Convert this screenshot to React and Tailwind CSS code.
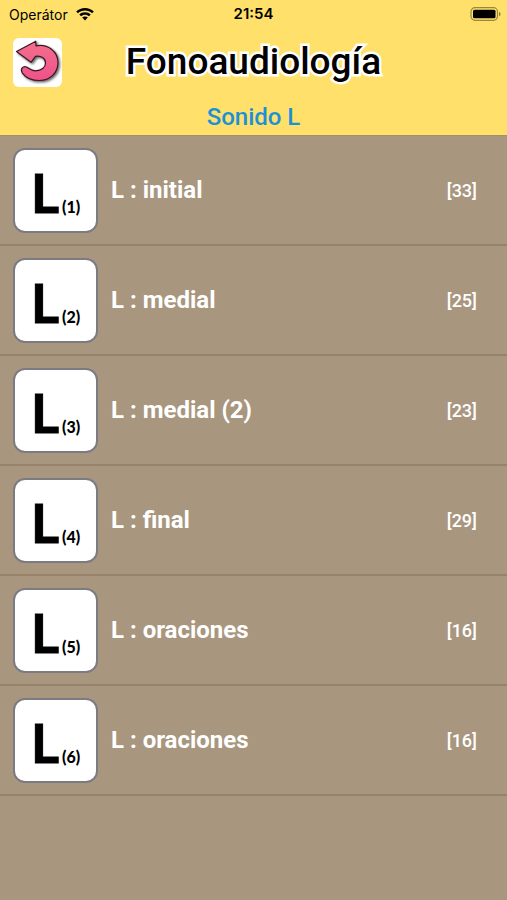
import React from 'react';

// --- DATA ---
const SOUNDS = [
  { id: 1, label: 'L : initial', count: 33 },
  { id: 2, label: 'L : medial', count: 25 },
  { id: 3, label: 'L : medial (2)', count: 23 },
  { id: 4, label: 'L : final', count: 29 },
  { id: 5, label: 'L : oraciones', count: 16 },
  { id: 6, label: 'L : oraciones', count: 16 },
];

// --- ICONS ---

const WifiIcon = () => (
  <svg viewBox="0 0 18 13" className="h-[13px] w-[18px]" fill="#000" aria-hidden="true">
    <path d="M9 0C5.600 0 2.500 1.300 0.200 3.500l1.700 1.800C3.800 3.500 6.300 2.500 9 2.500s5.200 1 7.100 2.800l1.700-1.800C15.500 1.300 12.400 0 9 0Z" />
    <path d="M9 4.300c-2.200 0-4.200.8-5.700 2.300L5 8.300c1.100-1 2.500-1.600 4-1.600s2.900.6 4 1.600l1.700-1.700C13.200 5.100 11.200 4.300 9 4.300Z" />
    <path d="M9 8.400c-1.100 0-2 .4-2.800 1.100L9 12.600l2.800-3.100C11 8.800 10.100 8.400 9 8.400Z" />
  </svg>
);

const BatteryIcon = () => (
  <svg viewBox="0 0 32 14" className="h-[14px] w-8" aria-hidden="true">
    <rect x="1" y="0.700" width="26.500" height="12.600" rx="4" fill="none" stroke="#000" strokeOpacity="0.400" strokeWidth="1.200" />
    <rect x="3" y="2.700" width="22.500" height="8.600" rx="1.500" fill="#000" />
    <path d="M29 4.700v4.600c1-.4 1.600-1.300 1.600-2.300S30 5.100 29 4.700Z" fill="#000" fillOpacity="0.400" />
  </svg>
);

const BackArrow = () => (
  <svg viewBox="0 0 49 49" className="h-full w-full" aria-hidden="true">
    <defs>
      <linearGradient id="pink" x1="0" y1="0" x2="0" y2="1">
        <stop offset="0" stopColor="#f4708f" />
        <stop offset="1" stopColor="#ee5288" />
      </linearGradient>
      <filter id="shade" x="-20%" y="-20%" width="150%" height="150%">
        <feDropShadow dx="1.500" dy="1.500" stdDeviation="0.900" floodColor="#000" floodOpacity="0.600" />
      </filter>
    </defs>
    <path
      d="M3.500 13.500 22.800 3.200 23 7.800C35 5.500 45 13.500 45 24.500 45 35 37 42.500 26.500 42.500 19 42.500 12.500 39.500 9.200 34.800 7 31 10 27.500 13.500 29 16 30.500 18 32.800 22.500 32.800 28.500 32.800 32.500 29.500 32.500 25 32.500 20.500 28 17.300 22.500 18.300L18 24.300Z"
      fill="url(#pink)"
      stroke="#3a1824"
      strokeWidth="1.200"
      strokeLinejoin="round"
      filter="url(#shade)"
    />
  </svg>
);

// --- HELPER COMPONENTS ---

const StatusBar = () => (
  <div className="grid h-7 grid-cols-3 items-center px-[9px] font-['Inter',sans-serif] text-[14px] text-black">
    <div className="flex items-center gap-2">
      <span>Operátor</span>
      <WifiIcon />
    </div>
    <span className="text-center text-[15px] font-semibold">21:54</span>
    <div className="-mr-1 flex justify-end">
      <BatteryIcon />
    </div>
  </div>
);

const Header = () => (
  <header className="bg-[#ffe06a]">
    <StatusBar />
    <div className="grid grid-cols-[49px_1fr_49px] items-center px-[13px] pt-2">
      <button type="button" aria-label="Atrás" className="size-[49px] overflow-hidden rounded-md bg-white">
        <BackArrow />
      </button>
      <h1 className="text-center text-[37px] leading-[52px] font-medium text-black [-webkit-text-stroke:5px_white] [paint-order:stroke_fill]">
        Fonoaudiología
      </h1>
    </div>
    <h2 className="pt-[13px] pb-[2px] text-center text-[24px] leading-8 font-medium text-[#1d90d6]">Sonido L</h2>
  </header>
);

/**
 * White card with the letter and its group number
 */
const LetterTile = ({ number }) => (
  <span className="flex size-[85px] shrink-0 items-baseline justify-center gap-[3px] rounded-xl border-2 border-[#7d7b82] bg-white font-['Lato',sans-serif] text-black">
    <span className="text-[54px] leading-[86px] font-bold [-webkit-text-stroke:1px_black]">L</span>
    <span className="text-[16px] font-black">({number})</span>
  </span>
);

const SoundRow = ({ sound }) => (
  <li className="border-b-2 border-[#968369]">
    <button type="button" className="flex h-[108px] w-full items-center pr-[30px] pl-[13px] text-left text-white">
      <LetterTile number={sound.id} />
      <span className="ml-[13px] flex-1 text-[24px] font-bold">{sound.label}</span>
      <span className="text-[18px] font-medium">[{sound.count}]</span>
    </button>
  </li>
);

// --- MAIN ---

const App = () => (
  <div className="min-h-screen bg-[#a8967e] font-['Roboto',sans-serif]">
    <Header />
    <main className="border-t border-[#a08d74]">
      <ul>
        {SOUNDS.map((sound) => (
          <SoundRow key={sound.id} sound={sound} />
        ))}
      </ul>
    </main>
  </div>
);

export default App;
